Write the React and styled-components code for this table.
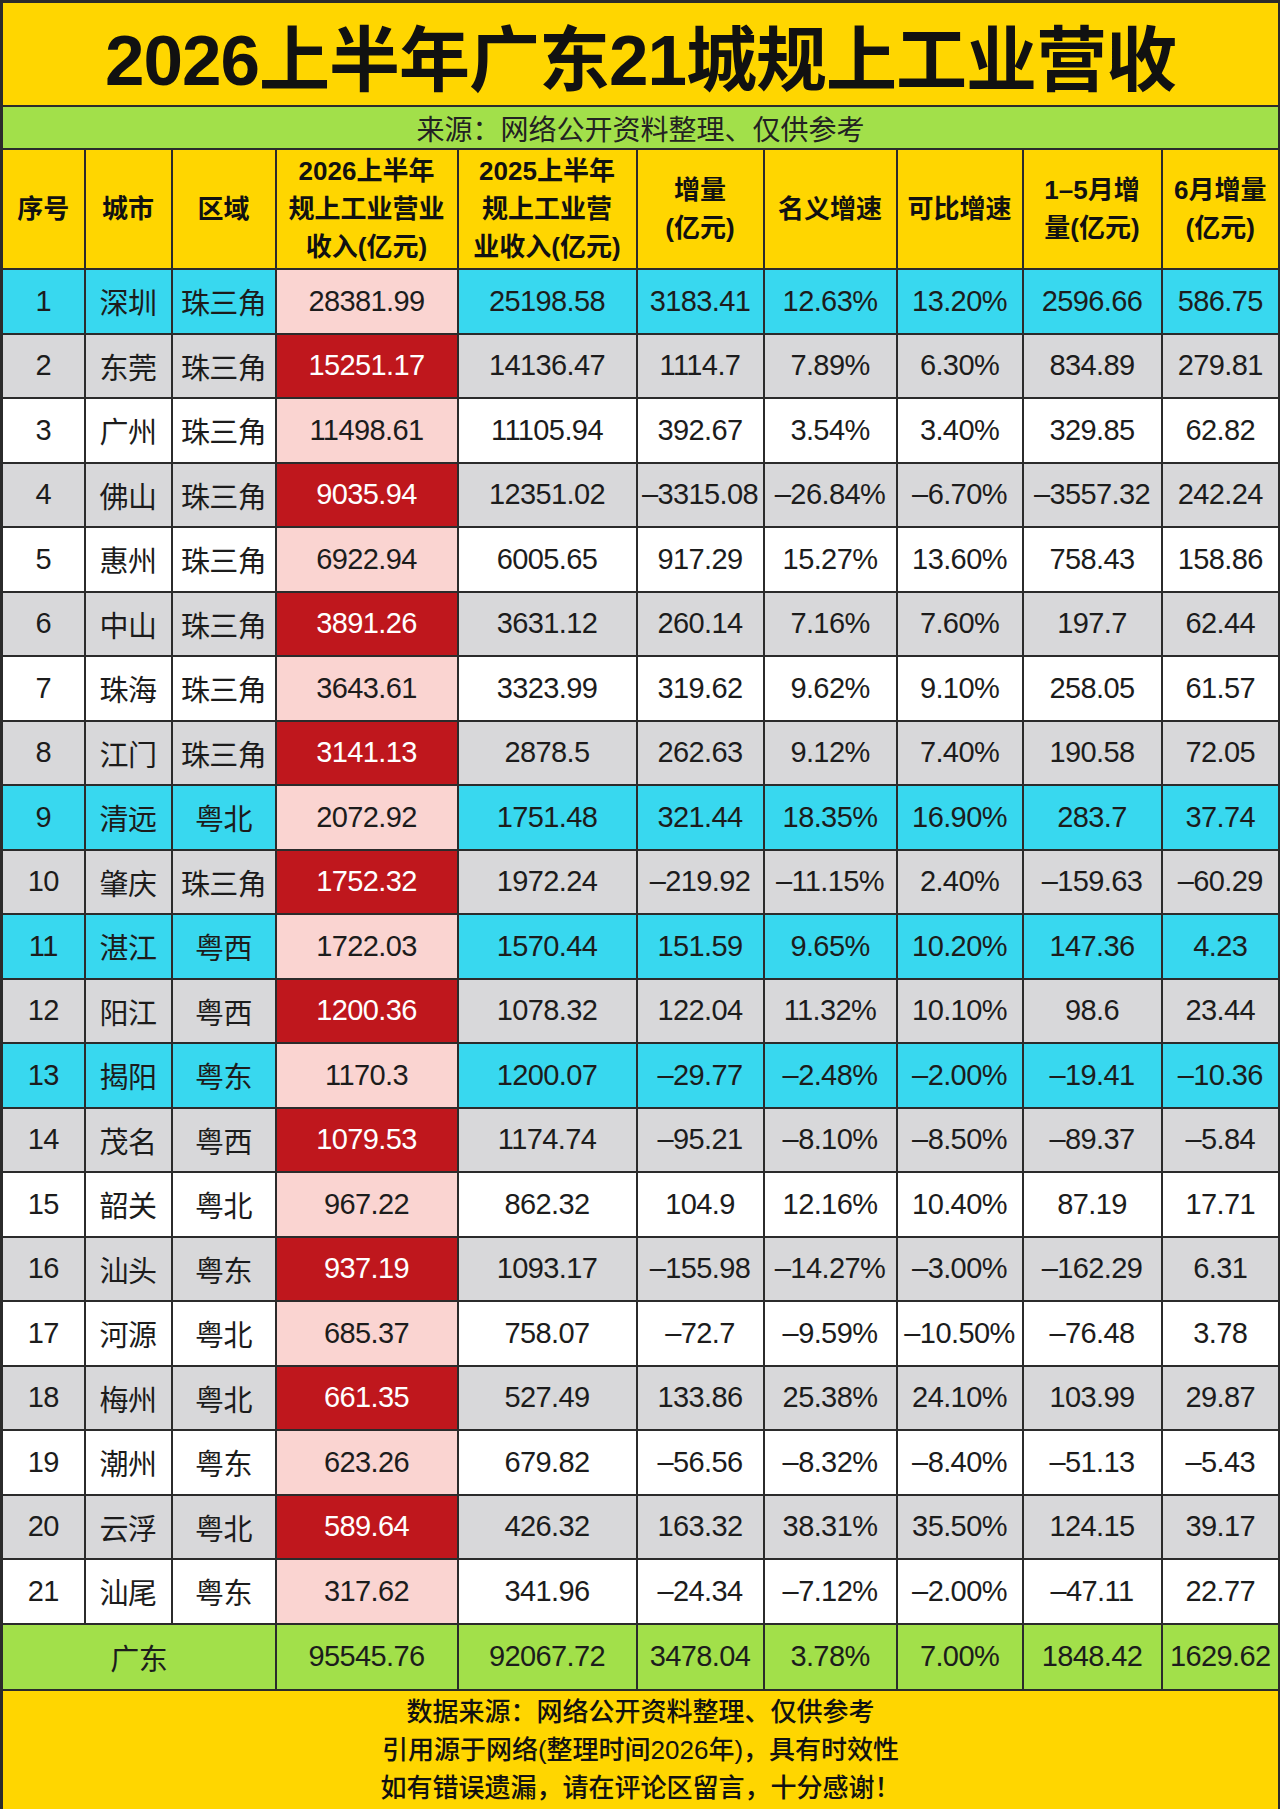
import { createGlobalStyle, styled } from 'styled-components'

const GlobalStyle = createGlobalStyle`
  html, body {
    margin: 0;
    padding: 0;
    background: #ffffff;
  }
  body {
    font-family: "Liberation Sans", "Noto Sans CJK SC", sans-serif;
    color: #1c1c1c;
  }
`

const YELLOW = '#ffd600'
const GREEN = '#a2e04a'
const CYAN = '#38d8ef'
const GRAY = '#d8d8da'
const PINK = '#fad4d1'
const RED = '#bf171d'
const LINE = '#2b2b2b'

const Sheet = styled.table`
  width: 1280px;
  border-collapse: collapse;
  table-layout: fixed;
  border: 3px solid ${LINE};
  font-family: "Liberation Sans", "Noto Sans CJK SC", sans-serif;
`

const TitleCell = styled.td`
  height: 91px;
  padding: 0;
  background: ${YELLOW};
  border: 2px solid ${LINE};
  text-align: center;
  font-size: 71px;
  font-weight: 700;
  color: #111;
  letter-spacing: -1px;
`

const SourceCell = styled.td`
  height: 41px;
  padding: 0;
  background: ${GREEN};
  border: 2px solid ${LINE};
  text-align: center;
  font-size: 28px;
  color: #222;
`

const HeadCell = styled.th`
  height: 118px;
  padding: 0 2px;
  background: ${YELLOW};
  border: 2px solid ${LINE};
  text-align: center;
  font-size: 26px;
  line-height: 38px;
  font-weight: 700;
  color: #111;
`

const Row = styled.tr`
  height: 64.5px;
  background: ${({ $bg }) => $bg};
`

const Cell = styled.td`
  padding: 0;
  border: 2px solid ${LINE};
  text-align: center;
  font-size: 29px;
  color: #1c1c1c;
  white-space: nowrap;
  letter-spacing: -0.6px;
`

const MainCell = styled(Cell)`
  background: ${({ $hot }) => ($hot ? RED : PINK)};
  color: ${({ $hot }) => ($hot ? '#ffffff' : '#1c1c1c')};
`

const TotalRow = styled.tr`
  height: 66px;
  background: ${GREEN};
`

const NoteCell = styled.td`
  height: 118px;
  padding: 0;
  background: ${YELLOW};
  border: 2px solid ${LINE};
  text-align: center;
  font-size: 26px;
  line-height: 38px;
  font-weight: 500;
  color: #111;
`

const widths = [83, 87, 104, 182, 179, 127, 133, 126, 139, 118]

const headers = [
  '序号',
  '城市',
  '区域',
  ['2026上半年', '规上工业营业', '收入(亿元)'],
  ['2025上半年', '规上工业营', '业收入(亿元)'],
  ['增量', '(亿元)'],
  '名义增速',
  '可比增速',
  ['1–5月增', '量(亿元)'],
  ['6月增量', '(亿元)'],
]

const rows = [
  ['深圳', '珠三角', '28381.99', '25198.58', '3183.41', '12.63%', '13.20%', '2596.66', '586.75'],
  ['东莞', '珠三角', '15251.17', '14136.47', '1114.7', '7.89%', '6.30%', '834.89', '279.81'],
  ['广州', '珠三角', '11498.61', '11105.94', '392.67', '3.54%', '3.40%', '329.85', '62.82'],
  ['佛山', '珠三角', '9035.94', '12351.02', '–3315.08', '–26.84%', '–6.70%', '–3557.32', '242.24'],
  ['惠州', '珠三角', '6922.94', '6005.65', '917.29', '15.27%', '13.60%', '758.43', '158.86'],
  ['中山', '珠三角', '3891.26', '3631.12', '260.14', '7.16%', '7.60%', '197.7', '62.44'],
  ['珠海', '珠三角', '3643.61', '3323.99', '319.62', '9.62%', '9.10%', '258.05', '61.57'],
  ['江门', '珠三角', '3141.13', '2878.5', '262.63', '9.12%', '7.40%', '190.58', '72.05'],
  ['清远', '粤北', '2072.92', '1751.48', '321.44', '18.35%', '16.90%', '283.7', '37.74'],
  ['肇庆', '珠三角', '1752.32', '1972.24', '–219.92', '–11.15%', '2.40%', '–159.63', '–60.29'],
  ['湛江', '粤西', '1722.03', '1570.44', '151.59', '9.65%', '10.20%', '147.36', '4.23'],
  ['阳江', '粤西', '1200.36', '1078.32', '122.04', '11.32%', '10.10%', '98.6', '23.44'],
  ['揭阳', '粤东', '1170.3', '1200.07', '–29.77', '–2.48%', '–2.00%', '–19.41', '–10.36'],
  ['茂名', '粤西', '1079.53', '1174.74', '–95.21', '–8.10%', '–8.50%', '–89.37', '–5.84'],
  ['韶关', '粤北', '967.22', '862.32', '104.9', '12.16%', '10.40%', '87.19', '17.71'],
  ['汕头', '粤东', '937.19', '1093.17', '–155.98', '–14.27%', '–3.00%', '–162.29', '6.31'],
  ['河源', '粤北', '685.37', '758.07', '–72.7', '–9.59%', '–10.50%', '–76.48', '3.78'],
  ['梅州', '粤北', '661.35', '527.49', '133.86', '25.38%', '24.10%', '103.99', '29.87'],
  ['潮州', '粤东', '623.26', '679.82', '–56.56', '–8.32%', '–8.40%', '–51.13', '–5.43'],
  ['云浮', '粤北', '589.64', '426.32', '163.32', '38.31%', '35.50%', '124.15', '39.17'],
  ['汕尾', '粤东', '317.62', '341.96', '–24.34', '–7.12%', '–2.00%', '–47.11', '22.77'],
]

const highlighted = [1, 9, 11, 13]

function rowColor(n) {
  if (n % 2 === 0) return GRAY
  return highlighted.includes(n) ? CYAN : '#ffffff'
}

function Lines({ text }) {
  if (!Array.isArray(text)) return text
  return text.map((line, i) => (
    <span key={i}>
      {i > 0 && <br />}
      {line}
    </span>
  ))
}

export default function App() {
  return (
    <>
      <GlobalStyle />
      <Sheet>
        <colgroup>
          {widths.map((w, i) => (
            <col key={i} style={{ width: w }} />
          ))}
        </colgroup>
        <tbody>
          <tr>
            <TitleCell colSpan={10}>2026上半年广东21城规上工业营收</TitleCell>
          </tr>
          <tr>
            <SourceCell colSpan={10}>来源：网络公开资料整理、仅供参考</SourceCell>
          </tr>
          <tr>
            {headers.map((h, i) => (
              <HeadCell key={i}>
                <Lines text={h} />
              </HeadCell>
            ))}
          </tr>
          {rows.map((r, i) => {
            const n = i + 1
            const [city, area, main, ...rest] = r
            return (
              <Row key={n} $bg={rowColor(n)}>
                <Cell>{n}</Cell>
                <Cell>{city}</Cell>
                <Cell>{area}</Cell>
                <MainCell $hot={n % 2 === 0}>{main}</MainCell>
                {rest.map((v, j) => (
                  <Cell key={j}>{v}</Cell>
                ))}
              </Row>
            )
          })}
          <TotalRow>
            <Cell colSpan={3}>广东</Cell>
            <Cell>95545.76</Cell>
            <Cell>92067.72</Cell>
            <Cell>3478.04</Cell>
            <Cell>3.78%</Cell>
            <Cell>7.00%</Cell>
            <Cell>1848.42</Cell>
            <Cell>1629.62</Cell>
          </TotalRow>
          <tr>
            <NoteCell colSpan={10}>
              数据来源：网络公开资料整理、仅供参考
              <br />
              引用源于网络(整理时间2026年)，具有时效性
              <br />
              如有错误遗漏，请在评论区留言，十分感谢！
            </NoteCell>
          </tr>
        </tbody>
      </Sheet>
    </>
  )
}
